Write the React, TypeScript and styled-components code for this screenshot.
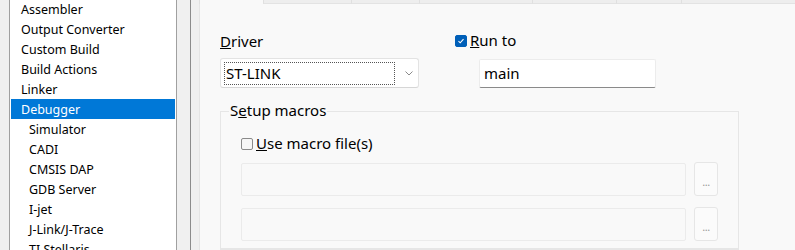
import styled, { createGlobalStyle } from "styled-components";

const GlobalStyle = createGlobalStyle`
  html, body {
    margin: 0;
    padding: 0;
    background: #f0f0f0;
    font-family: "Noto Sans", "Open Sans", sans-serif;
    color: #000;
  }
  * { box-sizing: border-box; }
`;

const Window = styled.div`
  display: flex;
  width: 795px;
  height: 250px;
  overflow: hidden;
  background: #f0f0f0;
`;

const Sidebar = styled.div`
  width: 191px;
  flex-shrink: 0;
  padding-left: 9px;
  border-right: 1px solid #8c8c8c;
`;

const CategoryList = styled.ul`
  list-style: none;
  margin: -1px 0 0;
  padding: 0 1px;
  width: 168px;
  height: 260px;
  background: #fff;
  border-left: 1px solid #a0a0a0;
  border-right: 1px solid #a0a0a0;
`;

const Category = styled.li<{ $sub?: boolean; $selected?: boolean }>`
  height: 20px;
  line-height: 22px;
  font-size: 12.5px;
  padding-left: ${({ $sub }) => ($sub ? "18px" : "10px")};
  background: ${({ $selected }) => ($selected ? "#0078d7" : "transparent")};
  color: ${({ $selected }) => ($selected ? "#fff" : "#000")};
  white-space: nowrap;
  overflow: hidden;
`;

const Main = styled.div`
  flex: 1;
  margin-left: 8px;
  display: flex;
  flex-direction: column;
`;

const TabStrip = styled.div`
  display: flex;
  height: 4px;
  flex-shrink: 0;
`;

const Tab = styled.div<{ $w: number; $active?: boolean }>`
  width: ${({ $w }) => $w}px;
  flex-shrink: 0;
  background: ${({ $active }) => ($active ? "#f9f9f9" : "#eeeeee")};
  border-left: 1px solid #e0e0e0;
  border-bottom: ${({ $active }) => ($active ? "none" : "1px solid #e3e3e3")};
`;

const TabFill = styled.div`
  flex: 1;
  background: #eeeeee;
  border-left: 1px solid #e0e0e0;
  border-bottom: 1px solid #e3e3e3;
`;

const Panel = styled.div`
  flex: 1;
  background: #f9f9f9;
  border-left: 1px solid #e5e5e5;
  padding: 26px 0 0 20px;
  font-size: 15px;
`;

const TopRow = styled.div`
  display: flex;
  align-items: flex-start;
`;

const DriverColumn = styled.div`
  width: 235px;
  display: flex;
  flex-direction: column;
`;

const Label = styled.div`
  height: 20px;
  line-height: 22px;
  white-space: nowrap;
`;

const Combo = styled.div`
  margin-top: 8px;
  width: 199px;
  height: 30px;
  background: #fff;
  border: 1px solid #e3e3e3;
  border-bottom-color: #d6d6d6;
  border-radius: 3px;
  display: flex;
  align-items: center;
  padding: 0 0 0 3px;
`;

const ComboValue = styled.div`
  width: 171px;
  height: 23px;
  border: 1px dotted #555;
  line-height: 21px;
  padding-left: 1px;
`;

const Chevron = styled.svg`
  margin-left: 10px;
`;

const RunColumn = styled.div`
  display: flex;
  flex-direction: column;
`;

const CheckRow = styled.label`
  display: flex;
  align-items: center;
  height: 20px;
  line-height: 20px;
  white-space: nowrap;
`;

const Box = styled.span<{ $checked?: boolean }>`
  width: 12px;
  height: 12px;
  margin: 2px 3px 0 0;
  border-radius: 2px;
  display: inline-flex;
  align-items: center;
  justify-content: center;
  background: ${({ $checked }) => ($checked ? "#005fb8" : "#f6f6f6")};
  border: 1px solid ${({ $checked }) => ($checked ? "#005fb8" : "#8a8a8a")};
`;

const RunInput = styled.div`
  margin: 9px 0 0 24px;
  width: 177px;
  height: 29px;
  background: #fff;
  border: 1px solid #ececec;
  border-bottom: 1px solid #8a8a8a;
  border-radius: 2px;
  line-height: 27px;
  padding-left: 4px;
`;

const Group = styled.fieldset`
  margin: 13px 0 0;
  width: 519px;
  height: 149px;
  padding: 0 0 0 8px;
  border: 1px solid #e6e6e6;
  border-bottom-width: 2px;
`;

const Legend = styled.legend`
  padding: 0 1px;
  height: 20px;
  line-height: 18px;
`;

const GroupBody = styled.div`
  padding: 12px 0 0 12px;
`;

const FileRows = styled.div`
  margin-top: 9px;
  display: flex;
  flex-direction: column;
  gap: 11px;
`;

const FileRow = styled.div`
  display: flex;
  align-items: center;
  gap: 8px;
  height: 34px;
`;

const FileField = styled.div`
  width: 445px;
  height: 33px;
  background: #f9f9f9;
  border: 1px solid #ebebeb;
  border-radius: 2px;
`;

const BrowseButton = styled.div`
  width: 24px;
  height: 34px;
  background: #fbfbfb;
  border: 1px solid #e6e6e6;
  border-radius: 3px;
  color: #9a9a9a;
  font-size: 11px;
  display: flex;
  align-items: center;
  justify-content: center;
  padding-top: 4px;
  letter-spacing: -0.5px;
`;

const categories: { name: string; sub?: boolean; selected?: boolean }[] = [
  { name: "Assembler" },
  { name: "Output Converter" },
  { name: "Custom Build" },
  { name: "Build Actions" },
  { name: "Linker" },
  { name: "Debugger", selected: true },
  { name: "Simulator", sub: true },
  { name: "CADI", sub: true },
  { name: "CMSIS DAP", sub: true },
  { name: "GDB Server", sub: true },
  { name: "I-jet", sub: true },
  { name: "J-Link/J-Trace", sub: true },
  { name: "TI Stellaris", sub: true },
];

const tabWidths = [64, 88, 68, 113, 84, 65];

export default function App() {
  return (
    <>
      <GlobalStyle />
      <Window>
        <Sidebar>
          <CategoryList>
            {categories.map((c) => (
              <Category key={c.name} $sub={c.sub} $selected={c.selected}>
                {c.name}
              </Category>
            ))}
          </CategoryList>
        </Sidebar>
        <Main>
          <TabStrip>
            {tabWidths.map((w, i) => (
              <Tab key={i} $w={w} $active={i === 0} />
            ))}
            <TabFill />
          </TabStrip>
          <Panel>
            <TopRow>
              <DriverColumn>
                <Label>
                  <u>D</u>river
                </Label>
                <Combo>
                  <ComboValue>ST-LINK</ComboValue>
                  <Chevron width="8" height="5" viewBox="0 0 8 5">
                    <path d="M0.5 0.5 L4 4 L7.5 0.5" fill="none" stroke="#8a8a8a" strokeWidth="1" />
                  </Chevron>
                </Combo>
              </DriverColumn>
              <RunColumn>
                <CheckRow>
                  <Box $checked>
                    <svg width="8" height="8" viewBox="0 0 8 8">
                      <path d="M1.5 4.2 L3.2 5.8 L6.5 2.2" fill="none" stroke="#fff" strokeWidth="1.1" />
                    </svg>
                  </Box>
                  <span>
                    <u>R</u>un to
                  </span>
                </CheckRow>
                <RunInput>main</RunInput>
              </RunColumn>
            </TopRow>
            <Group>
              <Legend>
                S<u>e</u>tup macros
              </Legend>
              <GroupBody>
                <CheckRow>
                  <Box />
                  <span>
                    <u>U</u>se macro file(s)
                  </span>
                </CheckRow>
                <FileRows>
                  <FileRow>
                    <FileField />
                    <BrowseButton>...</BrowseButton>
                  </FileRow>
                  <FileRow>
                    <FileField />
                    <BrowseButton>...</BrowseButton>
                  </FileRow>
                </FileRows>
              </GroupBody>
            </Group>
          </Panel>
        </Main>
      </Window>
    </>
  );
}
